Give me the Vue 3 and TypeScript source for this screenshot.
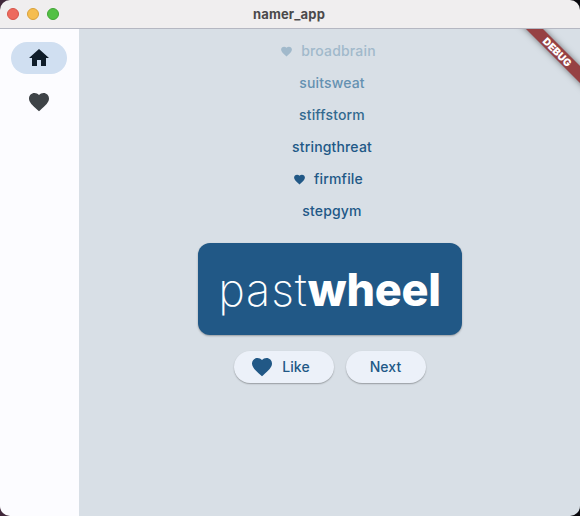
<script setup lang="ts">
interface WordPair {
  word: string
  liked: boolean
  tone: string
}

const heartPath =
  'M12 21.35l-1.45-1.32C5.4 15.36 2 12.28 2 8.5 2 5.42 4.42 3 7.5 3c1.74 0 3.41.81 4.5 2.09C13.09 3.81 14.76 3 16.5 3 19.58 3 22 5.42 22 8.5c0 3.78-3.4 6.86-8.55 11.54L12 21.35z'

const history: WordPair[] = [
  { word: 'broadbrain', liked: true, tone: 'faint' },
  { word: 'suitsweat', liked: false, tone: 'soft' },
  { word: 'stiffstorm', liked: false, tone: 'medium' },
  { word: 'stringthreat', liked: false, tone: 'full' },
  { word: 'firmfile', liked: true, tone: 'full' },
  { word: 'stepgym', liked: false, tone: 'full' },
]
</script>

<template>
  <div class="desktop">
    <div class="window">
      <header class="titlebar">
        <div class="lights">
          <span class="light close"></span>
          <span class="light minimize"></span>
          <span class="light expand"></span>
        </div>
        <span class="title">namer_app</span>
      </header>
      <div class="body">
        <nav class="rail">
          <div class="destination selected">
            <svg viewBox="0 0 24 24"><path d="M10 20v-6h4v6h5v-8h3L12 3 2 12h3v8z" /></svg>
          </div>
          <div class="destination">
            <svg viewBox="0 0 24 24"><path :d="heartPath" /></svg>
          </div>
        </nav>
        <main class="page">
          <ul class="history">
            <li v-for="pair in history" :key="pair.word" :class="[pair.tone, { liked: pair.liked }]">
              <svg v-if="pair.liked" viewBox="0 0 24 24"><path :d="heartPath" /></svg>
              <span>{{ pair.word }}</span>
            </li>
          </ul>
          <div class="card"><span class="first">past</span><span class="second">wheel</span></div>
          <div class="actions">
            <button class="like">
              <svg viewBox="0 0 24 24"><path :d="heartPath" /></svg>
              <span>Like</span>
            </button>
            <button class="next">Next</button>
          </div>
          <div class="corner"><div class="ribbon">DEBUG</div></div>
        </main>
      </div>
    </div>
  </div>
</template>

<style>
body {
  margin: 0;
  overflow: hidden;
}
</style>

<style scoped>
.desktop {
  width: 580px;
  height: 516px;
  background: linear-gradient(90deg, #40283a, #120d18 60%, #08080c);
  font-family: Inter, sans-serif;
}
.window {
  height: 516px;
  display: flex;
  flex-direction: column;
  border-radius: 10px;
  overflow: hidden;
}
.titlebar {
  box-sizing: border-box;
  height: 29px;
  flex: none;
  display: grid;
  grid-template-columns: 1fr auto 1fr;
  align-items: center;
  background: #f0eeef;
  border-bottom: 1px solid #b5b7c2;
}
.lights {
  display: flex;
  gap: 8px;
  padding-left: 7px;
}
.light {
  box-sizing: border-box;
  width: 12px;
  height: 12px;
  border-radius: 50%;
}
.close {
  background: #ed6a5e;
  border: 1px solid #d65549;
}
.minimize {
  background: #f5bd4f;
  border: 1px solid #d9a13b;
}
.expand {
  background: #53c045;
  border: 1px solid #42a536;
}
.title {
  padding-right: 2px;
  font-size: 13px;
  font-weight: 700;
  line-height: 16px;
  letter-spacing: 0.15px;
  color: #4b494b;
}
.body {
  flex: 1;
  display: flex;
  min-height: 0;
}
.rail {
  width: 79px;
  box-sizing: border-box;
  padding: 13px 12px 0 11px;
  display: flex;
  flex-direction: column;
  gap: 12px;
  background: #fcfcff;
}
.destination {
  height: 32px;
  border-radius: 16px;
  display: flex;
  align-items: center;
  justify-content: center;
  color: #3e4347;
}
.destination svg {
  width: 24px;
  height: 24px;
}
.selected {
  background: #d0dff1;
  color: #0f1c28;
}
svg {
  fill: currentColor;
  display: block;
  flex: none;
}
.page {
  position: relative;
  flex: 1;
  overflow: hidden;
  display: flex;
  flex-direction: column;
  align-items: center;
  background: #d8dfe6;
}
.history {
  width: 264px;
  list-style: none;
  margin: 0;
  padding: 6px 0 0;
}
.history li {
  height: 32px;
  box-sizing: border-box;
  display: flex;
  align-items: center;
  justify-content: center;
  gap: 8px;
  padding-left: 5px;
  font-size: 14px;
  font-weight: 550;
  line-height: 20px;
  letter-spacing: 0.16px;
  color: #215886;
}
.history li.liked {
  padding: 0 3px 0 0;
}
.history li svg {
  width: 13px;
  height: 13px;
}
.history li.faint {
  color: #a1b9cb;
}
.history li.soft {
  color: #6591b1;
}
.history li.medium {
  color: #32698f;
}
.card {
  width: 264px;
  height: 92px;
  margin-top: 16px;
  padding-top: 2px;
  box-sizing: border-box;
  display: flex;
  align-items: center;
  justify-content: center;
  border-radius: 12px;
  background: #215886;
  box-shadow: 0 1px 2px rgba(0, 0, 0, 0.3);
  color: #fff;
  font-size: 45px;
  line-height: 52px;
}
.first {
  font-weight: 230;
  letter-spacing: 0.9px;
}
.second {
  font-weight: 800;
  letter-spacing: -0.25px;
}
.actions {
  display: flex;
  gap: 12px;
  margin-top: 16px;
}
.actions button {
  height: 32px;
  border: 0;
  border-radius: 16px;
  padding: 0;
  display: flex;
  align-items: center;
  justify-content: center;
  background: #ecf1f9;
  box-shadow: 0 1px 1.5px rgba(0, 0, 0, 0.3);
  color: #215886;
  font-family: inherit;
  font-size: 14px;
  font-weight: 550;
  line-height: 20px;
  letter-spacing: 0.05px;
}
.actions .like {
  width: 100px;
  gap: 8px;
  padding-right: 7px;
  box-sizing: border-box;
}
.like svg {
  width: 24px;
  height: 24px;
}
.next {
  width: 80px;
}
.corner {
  position: absolute;
  top: 0;
  right: 0;
  width: 80px;
  height: 80px;
  overflow: hidden;
}
.ribbon {
  position: absolute;
  width: 121px;
  height: 12px;
  left: -3px;
  top: 17px;
  transform: rotate(45deg);
  background: #964143;
  box-shadow: 0 0 6px rgba(0, 0, 0, 0.5);
  color: #fff;
  font-size: 10.2px;
  font-weight: 900;
  line-height: 12px;
  letter-spacing: 0.1px;
  text-align: center;
}
</style>
